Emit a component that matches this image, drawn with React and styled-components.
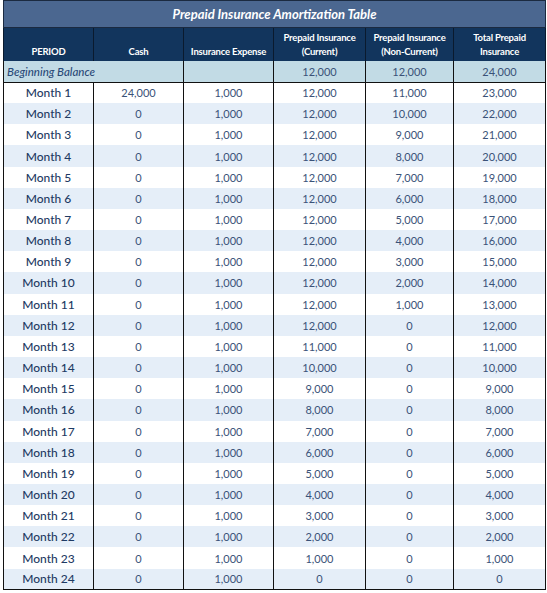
import React from 'react';
import styled, { createGlobalStyle } from 'styled-components';

const GlobalStyle = createGlobalStyle`
  html, body {
    margin: 0;
    padding: 0;
    background: #fff;
  }
  body {
    font-family: Lato, "Noto Sans", sans-serif;
  }
`;

const rows = Array.from({ length: 24 }, (_, i) => {
  const m = i + 1;
  const current = m <= 12 ? 12000 : 24000 - m * 1000;
  const nonCurrent = m <= 12 ? 12000 - m * 1000 : 0;
  return {
    period: `Month ${m}`,
    cash: m === 1 ? 24000 : 0,
    expense: 1000,
    current,
    nonCurrent,
    total: current + nonCurrent,
  };
});

const fmt = (n) => n.toLocaleString('en-US');

const App = () => {
  return (
    <Wrap>
      <GlobalStyle />
      <Table>
        <colgroup>
          <col style={{ width: 90 }} />
          <col style={{ width: 90 }} />
          <col style={{ width: 90 }} />
          <col style={{ width: 92 }} />
          <col style={{ width: 88 }} />
          <col style={{ width: 92 }} />
        </colgroup>
        <thead>
          <tr>
            <TitleCell colSpan={6}>Prepaid Insurance Amortization Table</TitleCell>
          </tr>
          <tr>
            <HeadCell>PERIOD</HeadCell>
            <HeadCell>Cash</HeadCell>
            <HeadCell>Insurance Expense</HeadCell>
            <HeadCell>Prepaid Insurance<br />(Current)</HeadCell>
            <HeadCell>Prepaid Insurance<br />(Non-Current)</HeadCell>
            <HeadCell>Total Prepaid<br />Insurance</HeadCell>
          </tr>
        </thead>
        <tbody>
          <OpeningRow>
            <OpeningLabel colSpan={2}>Beginning Balance</OpeningLabel>
            <Num />
            <Num>12,000</Num>
            <Num>12,000</Num>
            <Num>24,000</Num>
          </OpeningRow>
          {rows.map((r, i) => (
            <MonthRow key={r.period} $alt={i % 2 === 1}>
              <Period>{r.period}</Period>
              <Num>{fmt(r.cash)}</Num>
              <Num>{fmt(r.expense)}</Num>
              <Num>{fmt(r.current)}</Num>
              <Num>{fmt(r.nonCurrent)}</Num>
              <Num>{fmt(r.total)}</Num>
            </MonthRow>
          ))}
        </tbody>
      </Table>
    </Wrap>
  );
};

const Wrap = styled.div`
  padding: 0 2px 0 3px;
`;

const Table = styled.table`
  width: 542px;
  table-layout: fixed;
  border-collapse: collapse;
  border: 1px solid #111;
`;

const TitleCell = styled.th`
  height: 26px;
  padding: 0;
  background: #4b6790;
  color: #fff;
  font-size: 13px;
  font-weight: 700;
  font-style: italic;
  text-align: center;
  border: 1px solid #1b2a40;
`;

const HeadCell = styled.th`
  height: 31px;
  padding: 0 2px 2px;
  background: #12355d;
  color: #fff;
  font-size: 9.5px;
  font-weight: 700;
  line-height: 14px;
  letter-spacing: -0.2px;
  text-align: center;
  vertical-align: bottom;
  border-left: 1px solid #0a1a2e;
  border-right: 1px solid #0a1a2e;
`;

const OpeningRow = styled.tr`
  background: #c2dbe5;
  height: 21px;
  border-bottom: 1px solid #111;
`;

const OpeningLabel = styled.td`
  padding: 0 0 0 3px;
  color: #2a4a78;
  font-size: 11.5px;
  font-weight: 500;
  font-style: italic;
  text-align: left;
  border-right: 1px solid #111;
`;

const MonthRow = styled.tr`
  height: 21.17px;
  background: ${(p) => (p.$alt ? '#e5eef8' : '#ffffff')};
`;

const Period = styled.td`
  padding: 0;
  color: #1e3a63;
  font-size: 12px;
  font-weight: 500;
  text-align: center;
  border-left: 1px solid #111;
  border-right: 1px solid #111;
`;

const Num = styled.td`
  padding: 0;
  color: #3a5278;
  font-size: 11px;
  font-weight: 400;
  text-align: center;
  border-left: 1px solid #111;
  border-right: 1px solid #111;
`;

export default App;
